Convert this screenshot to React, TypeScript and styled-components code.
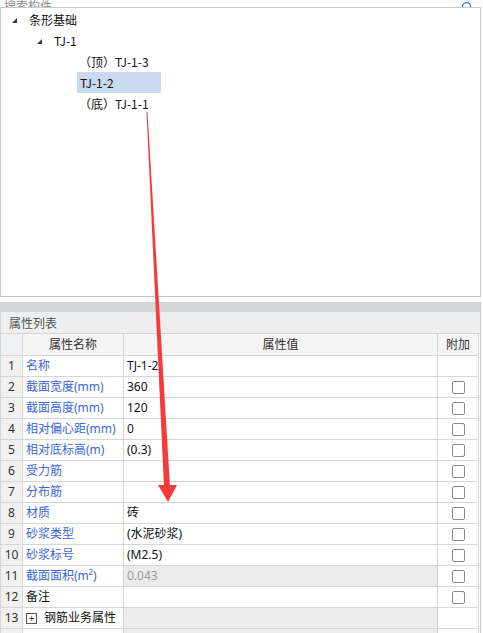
import styled, { createGlobalStyle } from 'styled-components';
import { Search } from 'lucide-react';

const GlobalStyle = createGlobalStyle`
	*, *::before, *::after {
		box-sizing: border-box;
	}
	html, body {
		margin: 0;
		padding: 0;
		background: #ffffff;
	}
	body {
		font-family: 'Noto Sans', 'Noto Sans CJK SC', sans-serif;
		font-size: 12px;
		color: #1a1a1a;
	}
`;

const Page = styled.div`
	position: relative;
	width: 483px;
	height: 633px;
	overflow: hidden;
	background: #ffffff;
`;

const SearchStrip = styled.div`
	height: 8px;
	width: 481px;
	overflow: hidden;
	border-bottom: 1px solid #c6c8cc;
	display: flex;
	align-items: flex-end;
	justify-content: space-between;
	padding: 0 8px 0 4px;
`;

const SearchText = styled.span`
	color: #8c8c8c;
	font-size: 12px;
	line-height: 12px;
	margin-bottom: -5px;
	font-family: 'Noto Sans CJK SC', sans-serif;
`;

const SearchIcon = styled.span`
	display: flex;
	margin-bottom: -6px;
	color: #2b86d0;
`;

const TreePanel = styled.div`
	width: 481px;
	height: 289px;
	border-left: 1px solid #c8c8c8;
	border-right: 1px solid #c8c8c8;
	border-bottom: 1px solid #c8c8c8;
	padding-top: 1px;
`;

const TreeRow = styled.div<{ $indent: number }>`
	height: 21px;
	display: flex;
	align-items: center;
	padding-left: ${(p) => p.$indent}px;
`;

const Toggle = styled.span`
	width: 0;
	height: 0;
	border-left: 5px solid transparent;
	border-bottom: 5px solid #3a3a3a;
	margin-right: 12px;
	margin-top: 2px;
`;

const TreeLabel = styled.span<{ $selected?: boolean }>`
	height: 21px;
	line-height: 21px;
	width: ${(p) => (p.$selected ? '84px' : 'auto')};
	padding-left: ${(p) => (p.$selected ? '3px' : '0')};
	background: ${(p) => (p.$selected ? '#c9d9ef' : 'transparent')};
	color: #111;
	font-size: 12px;
	font-family: 'Noto Sans CJK SC', sans-serif;
`;

const PropPanel = styled.div`
	margin-top: 5px;
	width: 481px;
	border-right: 1px solid #c8c8c8;
`;

const GrayBar = styled.div`
	height: 10px;
	background: #d5d6da;
`;

const TitleBar = styled.div`
	height: 22px;
	line-height: 21px;
	background: #eeeeee;
	border-bottom: 1px solid #d6d6d6;
	border-left: 1px solid #d6d6d6;
	padding-left: 8px;
	color: #555;
	font-size: 12px;
	font-family: 'Noto Sans CJK SC', sans-serif;
`;

const Grid = styled.div`
	width: 479px;
	border-left: 1px solid #d6d6d6;
`;

const Row = styled.div<{ $head?: boolean }>`
	display: grid;
	grid-template-columns: 22px 101px 314px 41px;
	height: ${(p) => (p.$head ? '22px' : '21px')};
`;

const Cell = styled.div<{ $bg?: string; $align?: string; $color?: string }>`
	border-right: 1px solid #d6d6d6;
	border-bottom: 1px solid #d6d6d6;
	background: ${(p) => p.$bg || '#ffffff'};
	color: ${(p) => p.$color || '#111'};
	display: flex;
	align-items: center;
	justify-content: ${(p) => p.$align || 'flex-start'};
	padding-left: ${(p) => (p.$align ? '0' : '3px')};
	font-size: 12px;
	line-height: 20px;
	white-space: nowrap;
	overflow: hidden;
	font-family: 'Noto Sans', 'Noto Sans CJK SC', sans-serif;
`;

const Checkbox = styled.span`
	width: 13px;
	height: 13px;
	border: 1px solid #8a8a8a;
	border-radius: 2px;
	background: #fff;
`;

const PlusBox = styled.span`
	width: 11px;
	height: 11px;
	flex: none;
	border: 1px solid #555;
	margin-right: 7px;
	display: flex;
	align-items: center;
	justify-content: center;
	font-size: 10px;
	line-height: 9px;
	color: #333;
`;

const Arrow = styled.svg`
	position: absolute;
	left: 0;
	top: 0;
	pointer-events: none;
`;

type Prop = {
	name: string;
	value?: string;
	check?: boolean;
	blue?: boolean;
	readonly?: boolean;
	group?: boolean;
};

const props: Prop[] = [
	{ name: '名称', value: 'TJ-1-2', blue: true },
	{ name: '截面宽度(mm)', value: '360', check: true, blue: true },
	{ name: '截面高度(mm)', value: '120', check: true, blue: true },
	{ name: '相对偏心距(mm)', value: '0', check: true, blue: true },
	{ name: '相对底标高(m)', value: '(0.3)', check: true, blue: true },
	{ name: '受力筋', check: true, blue: true },
	{ name: '分布筋', check: true, blue: true },
	{ name: '材质', value: '砖', check: true, blue: true },
	{ name: '砂浆类型', value: '(水泥砂浆)', check: true, blue: true },
	{ name: '砂浆标号', value: '(M2.5)', check: true, blue: true },
	{ name: '截面面积(m²)', value: '0.043', check: true, blue: true, readonly: true },
	{ name: '备注', check: true },
	{ name: '钢筋业务属性', group: true },
];

const App = () => {
	return (
		<Page>
			<GlobalStyle />
			<SearchStrip>
				<SearchText>搜索构件...</SearchText>
				<SearchIcon>
					<Search size={12} strokeWidth={2.5} />
				</SearchIcon>
			</SearchStrip>
			<TreePanel>
				<TreeRow $indent={11}>
					<Toggle />
					<TreeLabel>条形基础</TreeLabel>
				</TreeRow>
				<TreeRow $indent={36}>
					<Toggle />
					<TreeLabel>TJ-1</TreeLabel>
				</TreeRow>
				<TreeRow $indent={78}>
					<TreeLabel>（顶）TJ-1-3</TreeLabel>
				</TreeRow>
				<TreeRow $indent={76}>
					<TreeLabel $selected>TJ-1-2</TreeLabel>
				</TreeRow>
				<TreeRow $indent={78}>
					<TreeLabel>（底）TJ-1-1</TreeLabel>
				</TreeRow>
			</TreePanel>
			<PropPanel>
				<GrayBar />
				<TitleBar>属性列表</TitleBar>
				<Grid>
					<Row $head>
						<Cell $bg='#eef0f3' />
						<Cell $bg='#f5f5f5' $align='center' $color='#333'>
							属性名称
						</Cell>
						<Cell $bg='#f5f5f5' $align='center' $color='#333'>
							属性值
						</Cell>
						<Cell $bg='#f5f5f5' $align='center' $color='#333'>
							附加
						</Cell>
					</Row>
					{props.map((p, i) => (
						<Row key={p.name}>
							<Cell $bg='#f1f1f1' $align='center' $color='#333'>
								{i + 1}
							</Cell>
							<Cell $color={p.blue ? '#3d66d8' : '#111'}>
								{p.group && <PlusBox>+</PlusBox>}
								{p.name}
							</Cell>
							<Cell
								$bg={p.readonly || p.group ? '#ebebeb' : '#ffffff'}
								$color={p.readonly ? '#9a9a9a' : '#111'}
							>
								{p.value}
							</Cell>
							<Cell $align='center'>{p.check && <Checkbox />}</Cell>
						</Row>
					))}
					{/* next group row, only its top edge is in view */}
					<Row>
						<Cell $bg='#f1f1f1' />
						<Cell>
							<PlusBox />
						</Cell>
						<Cell $bg='#ebebeb' />
						<Cell />
					</Row>
				</Grid>
			</PropPanel>
			<Arrow width='483' height='633' viewBox='0 0 483 633'>
				<polygon points='146.5,112 147.5,112 170,487 164,487' fill='#f73b3b' />
				<polygon points='158,485 177,485 168,502' fill='#f73b3b' />
			</Arrow>
		</Page>
	);
};

export default App;
